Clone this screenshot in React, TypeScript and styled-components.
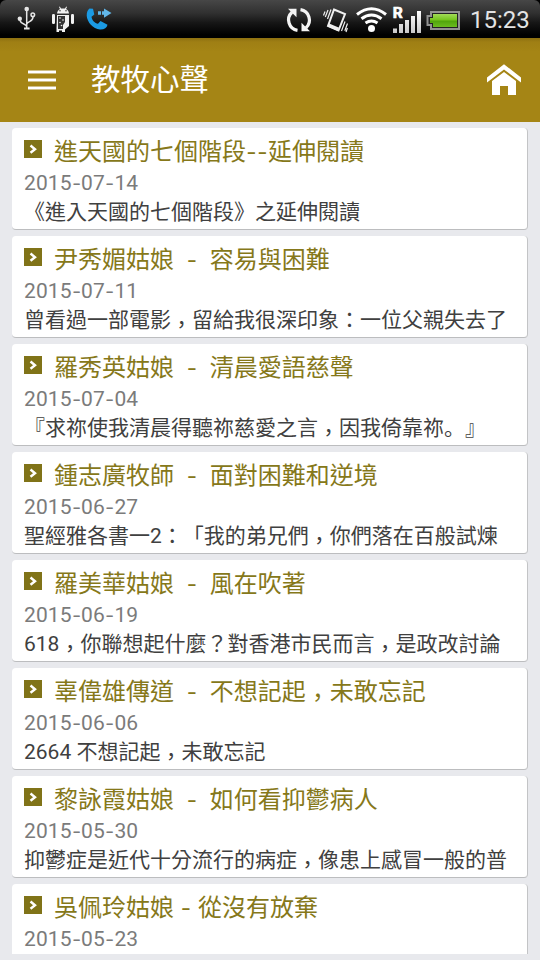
import React from 'react';
import styled, { createGlobalStyle } from 'styled-components';

const GlobalStyle = createGlobalStyle`
  * { box-sizing: border-box; }
  html, body { margin: 0; padding: 0; }
  body {
    background: #e8e9ed;
    font-family: Roboto, "Noto Sans CJK TC", sans-serif;
    text-spacing-trim: space-all;
    overflow: hidden;
  }
`;

const Screen = styled.div`
  width: 540px;
  height: 960px;
  display: flex;
  flex-direction: column;
  background: #e8e9ed;
  overflow: hidden;
`;

const StatusFrame = styled.div`
  flex: none;
  background: #000;
`;

const StatusBar = styled.div`
  height: 38px;
  display: flex;
  align-items: center;
  justify-content: space-between;
  border-radius: 6px 6px 0 0;
  background: linear-gradient(#474747 0, #303030 35%, #161616 60%, #000 92%);
  svg { display: block; }
`;

const StatusGroup = styled.div`
  display: flex;
  align-items: center;
`;

const Clock = styled.time`
  width: 70px;
  height: 38px;
  font: 400 24px/40px Roboto, sans-serif;
  color: #e4e4e4;
`;

const Header = styled.header`
  height: 84px;
  flex: none;
  display: flex;
  align-items: center;
  padding: 0 18px 0 28px;
  background: linear-gradient(#8e7110 0, #9f7f14 4px, #a58515 14px, #a58515 100%);
`;

const Menu = styled.button`
  width: 28px;
  height: 20px;
  margin-top: -1px;
  padding: 0;
  border: 0;
  background: none;
  display: flex;
  flex-direction: column;
  justify-content: space-between;
`;

const MenuLine = styled.span`
  height: 4px;
  width: 28px;
  background: #fff;
  border-top: 1px solid #cfbf85;
  border-bottom: 1px solid #cfbf85;
`;

const PageTitle = styled.h1`
  flex: 1;
  margin: -7px 0 0 34px;
  padding-left: 1px;
  font: 400 29.5px/40px "Noto Sans CJK TC", sans-serif;
  color: #fff;
`;

const List = styled.main`
  height: 832px;
  flex: none;
  padding: 6px 12px 0;
  display: flex;
  flex-direction: column;
  gap: 6px;
  overflow: hidden;
`;

const Card = styled.article`
  flex: none;
  width: 516px;
  height: 102px;
  padding: 8px 12px 0;
  border-radius: 4px;
  background: #fff;
  border-right: 1px solid #c3c4c6;
  border-bottom: 1px solid #bcbdbf;
  overflow: hidden;
`;

const Heading = styled.div`
  display: flex;
  height: 32px;
`;

const Bullet = styled.svg`
  flex: none;
  width: 18px;
  height: 18px;
  margin: 4px 12px 0 0;
`;

const Title = styled.h2`
  margin: 0;
  font: 400 24px/32px Roboto, "Noto Sans CJK TC", sans-serif;
  color: #86781a;
  white-space: pre;
`;

const DateLine = styled.div`
  height: 30px;
  font: 400 21px/30px Roboto, sans-serif;
  letter-spacing: 0.1px;
  color: #7b7b7b;
  white-space: pre;
`;

const Excerpt = styled.p`
  margin: 0;
  font: 400 21px/28px Roboto, "Noto Sans CJK TC", sans-serif;
  color: #404040;
  white-space: pre;
`;

const Hyphen = styled.span<{ $width: number }>`
  display: inline-block;
  width: ${p => p.$width}px;
  text-align: center;
  transform: scaleX(1.25);
`;

const Comma = styled.span`
  display: inline-block;
  width: 1em;
  line-height: 1;
  transform: translateY(0.26em);
`;

const Stop = styled.span`
  line-height: 1;
  font-family: "Noto Sans CJK SC", sans-serif;
`;

function Glyphs({ text, hyphen = 12 }: { text: string; hyphen?: number }) {
  return (
    <>
      {text.split(/([-，。])/).map((part, i) => {
        if (part === '-') return <Hyphen key={i} $width={hyphen}>-</Hyphen>;
        if (part === '，') return <Comma key={i}>，</Comma>;
        if (part === '。') return <Stop key={i}>。</Stop>;
        return part;
      })}
    </>
  );
}

const entries = [
  { title: '進天國的七個階段--延伸閱讀', date: '2015-07-14', text: '《進入天國的七個階段》之延伸閱讀', hyphen: 11 },
  { title: '尹秀媚姑娘  -  容易與困難', date: '2015-07-11', text: '曾看過一部電影，留給我很深印象：一位父親失去了' },
  { title: '羅秀英姑娘  -  清晨愛語慈聲', date: '2015-07-04', text: '『求祢使我清晨得聽祢慈愛之言，因我倚靠祢。』' },
  { title: '鍾志廣牧師  -  面對困難和逆境', date: '2015-06-27', text: '聖經雅各書一2：「我的弟兄們，你們落在百般試煉' },
  { title: '羅美華姑娘  -  風在吹著', date: '2015-06-19', text: '618，你聯想起什麼？對香港市民而言，是政改討論' },
  { title: '辜偉雄傳道  -  不想記起，未敢忘記', date: '2015-06-06', text: '2664 不想記起，未敢忘記' },
  { title: '黎詠霞姑娘  -  如何看抑鬱病人', date: '2015-05-30', text: '抑鬱症是近代十分流行的病症，像患上感冒一般的普' },
  { title: '吳佩玲姑娘 - 從沒有放棄', date: '2015-05-23', text: '' },
];

function NotificationIcons() {
  return (
    <svg width="120" height="38" viewBox="0 0 120 38">
      <g fill="none" stroke="#e6e6e6" strokeWidth="1.5">
        <path d="M26.7 9v20M20 20.500c1 4 6 3 6.700 6M33 17c0 5-5 4-6.300 7" />
        <circle cx="32.8" cy="14.700" r="1.800" />
      </g>
      <g fill="#e6e6e6">
        <circle cx="26.700" cy="9" r="2.300" />
        <circle cx="19.800" cy="18.700" r="2.200" />
        <rect x="24" y="27.500" width="5.600" height="2" />
      </g>
      <g fill="#f1f1f1">
        <path d="M57 13.500c.3-2.400 1.500-4 3-4.600l-1-2 .8-.4 1.200 2h4l1.200-2 .8.4-1 2c1.800.8 2.800 2.300 3 4.600z" />
        <path d="M57 15h12v11l-4 3.500v2.500h-3v-1.500h-3V32h-2.500v-4z" />
        <rect x="52" y="14" width="3" height="10" rx="1.200" />
        <rect x="71" y="14" width="3" height="10" rx="1.200" />
      </g>
      <path d="M58 16h7v6l-2 3v4h-5z" fill="#343434" />
      <g fill="#eee">
        <circle cx="60" cy="18" r=".8" /><circle cx="63" cy="20" r=".8" />
        <circle cx="60" cy="22.500" r=".8" /><circle cx="61.500" cy="25.500" r=".8" />
        <circle cx="60" cy="10.800" r=".7" fill="#222" /><circle cx="66" cy="10.800" r=".7" fill="#222" />
      </g>
      <path d="M89.500 8.500 93 8.800l1.300 5.700-2.800 2.200c.4 3.700 3.500 6.500 6.500 7l2.500-2.600 7 3.600c-.6 3.200-3.300 5-7.500 4.800-7-.4-13-7.500-13.300-14 0-3.500 1-5.600 2.800-7z" fill="#1b9ae3" />
      <path d="M98 11.200h3v3.600h-3zm4 0h2V8.500l7.500 4.500-7.500 4.700v-2.900h-2z" fill="#62b7e9" />
    </svg>
  );
}

const RoamingMark = styled.text`
  font: 700 14px Roboto, sans-serif;
  fill: #fff;
  stroke: #fff;
  stroke-width: 0.6px;
`;

function SystemIcons() {
  return (
    <svg width="188" height="38" viewBox="282 0 188 38">
      <defs>
        <linearGradient id="charge" x2="0" y2="1">
          <stop offset="0" stopColor="#a2db57" />
          <stop offset=".45" stopColor="#75c51e" />
          <stop offset=".55" stopColor="#51a50c" />
          <stop offset="1" stopColor="#6bbc1f" />
        </linearGradient>
        <linearGradient id="bars" x2="0" y2="1">
          <stop stopColor="#fff" /><stop offset="1" stopColor="#c8c8c8" />
        </linearGradient>
      </defs>
      <g fill="none" stroke="#f4f4f4" strokeWidth="3.200">
        <path d="M297.500 30.400A10.500 10.500 0 0 1 292 12.300" />
        <path d="M300.500 9.600A10.500 10.500 0 0 1 306 27.700" />
      </g>
      <path d="M288 8.700h8.500v8.500zM310 31.300h-8.500v-8.500z" fill="#f4f4f4" />
      <g fill="none" stroke="#efefef">
        <path d="M334 9.500 345 14l-6.500 16.500L328 26z" strokeWidth="2" />
        <path d="m328.500 25 10 4.300" strokeWidth="3.500" />
        <path d="m331 9.500-3.500 9.500M328 10l-2.700 7M325 11.500l-1.500 4M345 21.500l-3.500 9.500M347.500 23.500l-2.700 7.300M346 32l1.400-4" strokeWidth="1.200" />
      </g>
      <g fill="none" stroke="#fff" strokeWidth="3">
        <path d="M357 14.500q14.500-11.500 29 0" />
        <path d="M361.500 18.800q10-7.500 20 0" />
        <path d="M365.500 23q6-4 12 0" />
      </g>
      <circle cx="371.500" cy="28.500" r="3.500" fill="#fff" />
      <RoamingMark x="392.800" y="17.500" textLength="10" lengthAdjust="spacingAndGlyphs">R</RoamingMark>
      <path d="M393 28.500h4V33h-4zM399 24h4v9h-4zM405 20h4v13h-4zM411 16h4v17h-4zM417 11h4v22h-4z" fill="url(#bars)" />
      <path d="M431 12h28v17h-28v-4h-3.500v-9h3.500z" fill="#222" stroke="#929292" strokeWidth="2" />
      <path d="M433 14h24v13h-24v-4h-3v-5h3z" fill="url(#charge)" />
    </svg>
  );
}

export default function App() {
  return (
    <Screen>
      <GlobalStyle />
      <StatusFrame>
        <StatusBar>
          <NotificationIcons />
          <StatusGroup>
            <SystemIcons />
            <Clock>15:23</Clock>
          </StatusGroup>
        </StatusBar>
      </StatusFrame>
      <Header>
        <Menu aria-label="選單"><MenuLine /><MenuLine /><MenuLine /></Menu>
        <PageTitle>教牧心聲</PageTitle>
        <svg width="36" height="34" viewBox="0 0 36 34" fill="#fff">
          <path d="M18 1.200 35 14.500v5L18 6.500 1 19.500v-5z" />
          <path d="M18 9l12 9v14h-8v-9h-8v9H6V18z" />
        </svg>
      </Header>
      <List>
        {entries.map(e => (
          <Card key={e.date}>
            <Heading>
              <Bullet viewBox="0 0 18 18">
                <path d="M0 0h18v18H0z" fill="#807318" />
                <path d="m6.500 5.500 4.500 3.700-4.500 3.600" fill="none" stroke="#fff" strokeWidth="2.400" />
              </Bullet>
              <Title><Glyphs text={e.title} hyphen={e.hyphen} /></Title>
            </Heading>
            <DateLine><Glyphs text={e.date} hyphen={9.5} /></DateLine>
            <Excerpt><Glyphs text={e.text} /></Excerpt>
          </Card>
        ))}
      </List>
    </Screen>
  );
}
